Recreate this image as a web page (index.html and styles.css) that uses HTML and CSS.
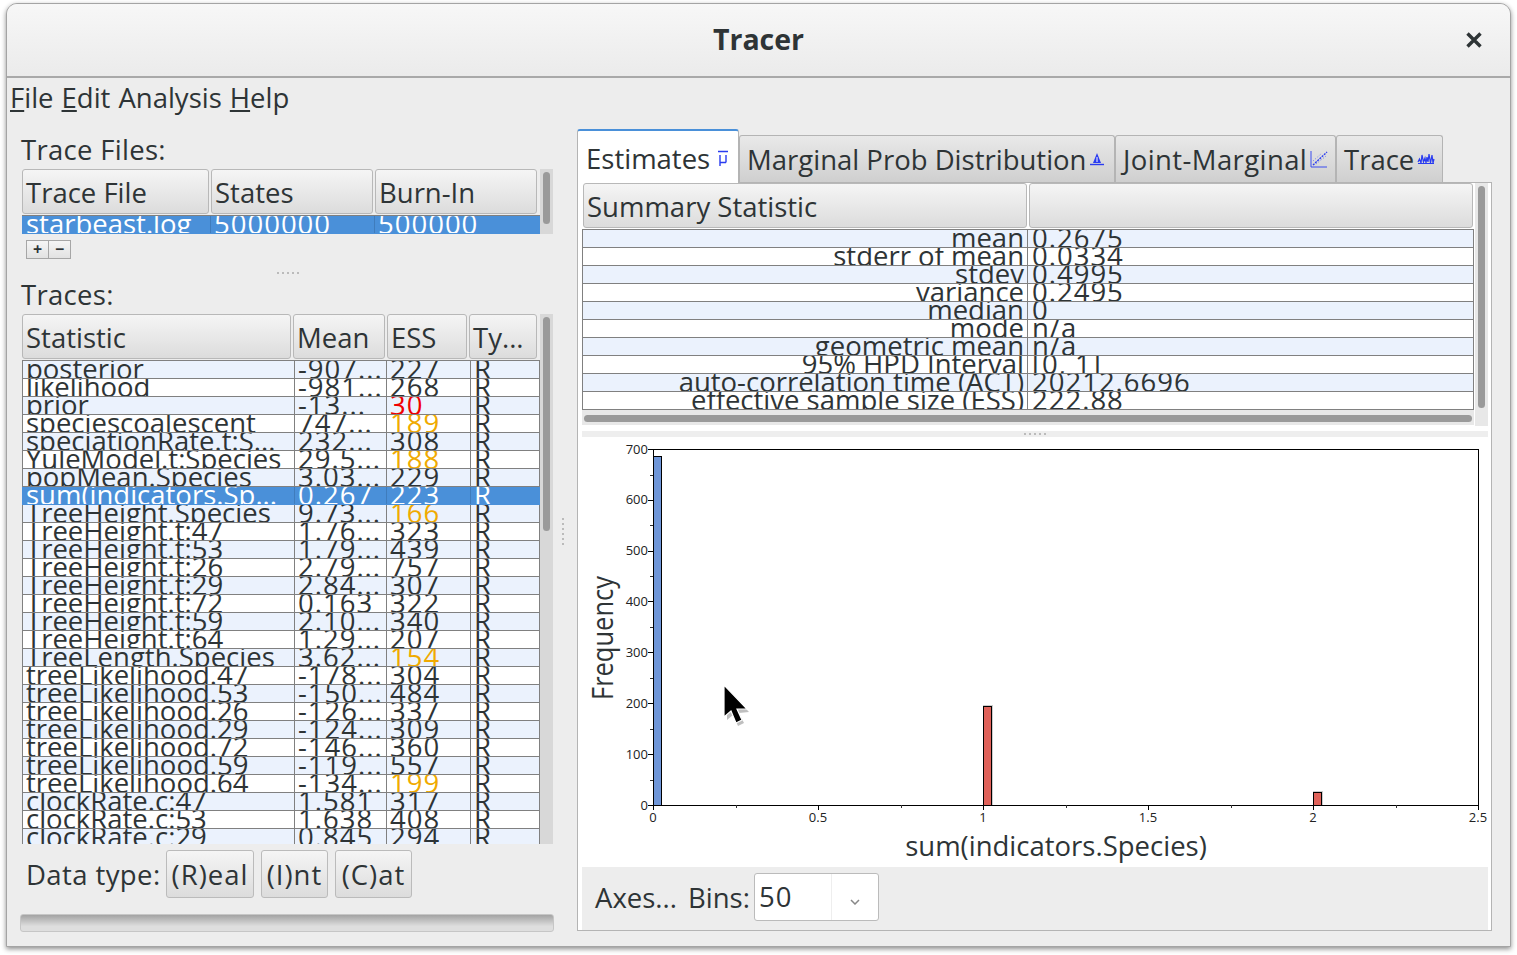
FILE: index.html
```html
<!DOCTYPE html>
<html lang="en">
<head>
  <meta charset="UTF-8" />
  <title>Tracer</title>
  <link rel="stylesheet" href="styles.css">
</head>
<body>
  <div class="window">
    <header class="titlebar">
      <span class="title">Tracer</span>
      <svg class="close" width="18" height="18" viewBox="0 0 18 18"><path d="M2.5 2.5 L15.5 15.5 M15.5 2.5 L2.5 15.5" stroke="#2e3436" stroke-width="3.4"/></svg>
    </header>
    <nav class="menubar">
      <span><u>F</u>ile</span>
      <span><u>E</u>dit</span>
      <span>Analysis</span>
      <span><u>H</u>elp</span>
    </nav>

    <div class="main">
      <section class="left">
        <div class="label files-label">Trace Files:</div>
        <div class="scrolled">
          <div class="table files">
            <div class="head">
              <div class="hcell">Trace File</div>
              <div class="hcell">States</div>
              <div class="hcell">Burn-In</div>
            </div>
            <div class="rows">
              <div class="row sel"><span>starbeast.log</span><span>5000000</span><span>500000</span></div>
            </div>
          </div>
          <div class="vtrack"><div class="vthumb files-thumb"></div></div>
        </div>
        <div class="addremove"><span>+</span><span>−</span></div>
        <div class="grip-h"><div class="dots-h"></div></div>
        <div class="label traces-label">Traces:</div>
        <div class="scrolled traces-wrap">
          <div class="table traces">
            <div class="head">
              <div class="hcell">Statistic</div>
              <div class="hcell">Mean</div>
              <div class="hcell">ESS</div>
              <div class="hcell">Ty...</div>
            </div>
            <div class="rows">
              <div class="row"><span>posterior</span><span>-907...</span><span>227</span><span>R</span></div>
              <div class="row"><span>likelihood</span><span>-981...</span><span>268</span><span>R</span></div>
              <div class="row"><span>prior</span><span>-13...</span><span class="bad">30</span><span>R</span></div>
              <div class="row"><span>speciescoalescent</span><span>747...</span><span class="low">189</span><span>R</span></div>
              <div class="row"><span>speciationRate.t:S...</span><span>232...</span><span>308</span><span>R</span></div>
              <div class="row"><span>YuleModel.t:Species</span><span>29.5...</span><span class="low">188</span><span>R</span></div>
              <div class="row"><span>popMean.Species</span><span>3.03...</span><span>229</span><span>R</span></div>
              <div class="row sel"><span>sum(indicators.Sp...</span><span>0.267</span><span>223</span><span>R</span></div>
              <div class="row"><span>TreeHeight.Species</span><span>9.73...</span><span class="low">166</span><span>R</span></div>
              <div class="row"><span>TreeHeight.t:47</span><span>1.76...</span><span>323</span><span>R</span></div>
              <div class="row"><span>TreeHeight.t:53</span><span>1.79...</span><span>439</span><span>R</span></div>
              <div class="row"><span>TreeHeight.t:26</span><span>2.79...</span><span>757</span><span>R</span></div>
              <div class="row"><span>TreeHeight.t:29</span><span>2.84...</span><span>307</span><span>R</span></div>
              <div class="row"><span>TreeHeight.t:72</span><span>0.163</span><span>322</span><span>R</span></div>
              <div class="row"><span>TreeHeight.t:59</span><span>2.10...</span><span>340</span><span>R</span></div>
              <div class="row"><span>TreeHeight.t:64</span><span>1.29...</span><span>207</span><span>R</span></div>
              <div class="row"><span>TreeLength.Species</span><span>3.62...</span><span class="low">154</span><span>R</span></div>
              <div class="row"><span>treeLikelihood.47</span><span>-178...</span><span>304</span><span>R</span></div>
              <div class="row"><span>treeLikelihood.53</span><span>-150...</span><span>484</span><span>R</span></div>
              <div class="row"><span>treeLikelihood.26</span><span>-126...</span><span>337</span><span>R</span></div>
              <div class="row"><span>treeLikelihood.29</span><span>-124...</span><span>309</span><span>R</span></div>
              <div class="row"><span>treeLikelihood.72</span><span>-146...</span><span>360</span><span>R</span></div>
              <div class="row"><span>treeLikelihood.59</span><span>-119...</span><span>557</span><span>R</span></div>
              <div class="row"><span>treeLikelihood.64</span><span>-134...</span><span class="low">199</span><span>R</span></div>
              <div class="row"><span>clockRate.c:47</span><span>1.581</span><span>317</span><span>R</span></div>
              <div class="row"><span>clockRate.c:53</span><span>1.638</span><span>408</span><span>R</span></div>
              <div class="row"><span>clockRate.c:29</span><span>0.845</span><span>294</span><span>R</span></div>
            </div>
          </div>
          <div class="vtrack"><div class="vthumb traces-thumb"></div></div>
        </div>
        <div class="datatype">
          <span class="dt-label">Data type:</span>
          <button class="btn btn-real">(R)eal</button>
          <button class="btn btn-int">(I)nt</button>
          <button class="btn btn-cat">(C)at</button>
        </div>
        <div class="progress"></div>
      </section>

      <div class="grip-v"><div class="dots-v"></div></div>

      <section class="right">
        <div class="tabs">
          <div class="tab active tab-est">Estimates
            <svg class="mu" width="12" height="18" viewBox="0 0 12 18"><path d="M1 1.5 H11 M3 5 V16 M3 12.5 H9 M9 5 V12.5" stroke="#2a3cf0" stroke-width="1.4" fill="none"/></svg>
          </div>
          <div class="tab tab-marg">Marginal Prob Distribution
            <svg width="16" height="14" viewBox="0 0 16 14"><path d="M8 1 L12 11 H4 Z" fill="#2a3cf0"/><path d="M8 5 V10" stroke="#fff"/><path d="M1 12.5 H15" stroke="#2a3cf0" stroke-width="1.4"/></svg>
          </div>
          <div class="tab tab-joint">Joint-Marginal
            <svg width="18" height="18" viewBox="0 0 18 18"><path d="M1 1 V17 H17" stroke="#3a4cf0" fill="none"/><path d="M3 15 L17 2" stroke="#2a3cf0" stroke-width="1.4" stroke-dasharray="2 1"/><path d="M6 14 L16 6 M3 11 L12 3" stroke="#6a78f0" stroke-dasharray="1 2"/></svg>
          </div>
          <div class="tab tab-trace">Trace
            <svg width="18" height="14" viewBox="0 0 18 14"><path d="M1 10 L2.5 7 L4 11 L5 3 L6.5 10 L8 6 L9 11 L10 5 L11 10 L12 2 L13.5 11 L15 3 L16 11 L17 7 M1 11.5 H17" stroke="#2a3cf0" stroke-width="1.2" fill="none"/></svg>
          </div>
        </div>
        <div class="panel">
          <div class="summary">
            <div class="summary-main">
              <div class="table stats">
                <div class="head">
                  <div class="hcell">Summary Statistic</div>
                  <div class="hcell"></div>
                </div>
                <div class="rows">
                  <div class="row"><span>mean</span><span>0.2675</span></div>
                  <div class="row"><span>stderr of mean</span><span>0.0334</span></div>
                  <div class="row"><span>stdev</span><span>0.4995</span></div>
                  <div class="row"><span>variance</span><span>0.2495</span></div>
                  <div class="row"><span>median</span><span>0</span></div>
                  <div class="row"><span>mode</span><span>n/a</span></div>
                  <div class="row"><span>geometric mean</span><span>n/a</span></div>
                  <div class="row"><span>95% HPD Interval</span><span>[0, 1]</span></div>
                  <div class="row"><span>auto-correlation time (ACT)</span><span>20212.6696</span></div>
                  <div class="row"><span>effective sample size (ESS)</span><span>222.88</span></div>
                </div>
              </div>
              <div class="htrack"><div class="hthumb"></div></div>
            </div>
            <div class="vtrack stats-track"><div class="vthumb stats-thumb"></div></div>
          </div>
          <div class="grip-band"><div class="dots-h"></div></div>
          <svg class="chart" width="906" height="430" viewBox="582 437 906 430">
            <rect x="653.5" y="449.5" width="825" height="356" fill="#fff" stroke="#000"/>
            <!-- y ticks -->
            <path d="M648 805.5H653 M648 754.5H653 M648 703.5H653 M648 652.5H653 M648 601.5H653 M648 551.5H653 M648 500.5H653 M648 449.5H653" stroke="#000"/>
            <path d="M650 780.5H653 M650 729.5H653 M650 678.5H653 M650 627.5H653 M650 576.5H653 M650 525.5H653 M650 475.5H653" stroke="#333"/>
            <!-- x ticks -->
            <path d="M653.5 805V810 M818.5 805V810 M983.5 805V810 M1148.5 805V810 M1313.5 805V810 M1478.5 805V810" stroke="#000"/>
            <path d="M736.5 805V808 M901.5 805V808 M1066.5 805V808 M1231.5 805V808 M1396.5 805V808" stroke="#333"/>
            <g class="tick-y">
              <text x="648" y="810">0</text>
              <text x="648" y="759">100</text>
              <text x="648" y="708">200</text>
              <text x="648" y="657">300</text>
              <text x="648" y="606">400</text>
              <text x="648" y="555">500</text>
              <text x="648" y="504">600</text>
              <text x="648" y="454">700</text>
            </g>
            <g class="tick-x">
              <text x="653" y="822">0</text>
              <text x="818" y="822">0.5</text>
              <text x="983" y="822">1</text>
              <text x="1148" y="822">1.5</text>
              <text x="1313" y="822">2</text>
              <text x="1478" y="822">2.5</text>
            </g>
            <path d="M983 705h10v100h-10z M1313 791h10v14h-10z" fill="#ccc"/>
            <rect x="653.5" y="456.5" width="8" height="349" fill="#6f96d8" stroke="#000"/>
            <rect x="983.5" y="706.5" width="8" height="99" fill="#e0625a" stroke="#000"/>
            <rect x="1313.5" y="792.5" width="8" height="13" fill="#e0625a" stroke="#000"/>
            <text class="axis-title" x="1056" y="856" text-anchor="middle">sum(indicators.Species)</text>
            <text class="axis-title freq" transform="translate(613 638) rotate(-90) scale(1 1.15)" text-anchor="middle">Frequency</text>
          </svg>
          <div class="chart-bar">
            <span class="axes">Axes...</span>
            <span class="bins">Bins:</span>
            <div class="combo"><span class="combo-val">50</span><span class="combo-arrow"><svg width="10" height="6" viewBox="0 0 10 6"><path d="M1 1 L5 5 L9 1" stroke="#888" stroke-width="1.5" fill="none"/></svg></span></div>
          </div>
        </div>
      </section>
    </div>

    <svg class="cursor" width="30" height="44" viewBox="0 0 30 44"><path d="M5 5 V36 L11 31 L16 42 L22 39 L17 29 L27 28 Z" fill="#000" opacity="0.25"/><path d="M2 1 V33 L9 27 L14 39 L20 36 L15 25 L25 25 Z" fill="#000" stroke="#fff" stroke-width="1.2"/></svg>
  </div>
</body>
</html>
```

FILE: styles.css
```css
* {
  box-sizing: border-box;
}

body {
  margin: 0;
  padding: 3px 0 0 6px;
  width: 1517px;
  height: 955px;
  overflow: hidden;
  background-color: #fff;
  font-family: "Open Sans", sans-serif;
  font-size: 27.5px;
  color: #2e3436;
}

.window {
  position: relative;
  width: 1505px;
  height: 944px;
  background-color: #ededed;
  border: 1px solid #a4a4a4;
  border-radius: 11px 11px 0 0;
  box-shadow: 0 2px 5px rgba(0,0,0,0.45);
  display: flex;
  flex-direction: column;
}

/* Title bar */
.titlebar {
  height: 74px;
  flex: none;
  padding-bottom: 2px;
  display: flex;
  align-items: center;
  justify-content: center;
  position: relative;
  background: linear-gradient(#f7f7f7, #ebebeb);
  border-bottom: 2px solid #a9a9a9;
  border-radius: 10px 10px 0 0;
}

.title {
  font-weight: 700;
  font-size: 28.5px;
}

.close {
  position: absolute;
  right: 27px;
  top: 27px;
}

.menubar {
  height: 40px;
  flex: none;
  display: flex;
  gap: 8px;
  align-items: center;
  padding: 0 0 2px 3px;
}

.main {
  flex: 1;
  display: flex;
}

/* Left pane */
.left {
  width: 547px;
  flex: none;
  padding-left: 15px;
  display: flex;
  flex-direction: column;
}

.label {
  margin-left: -1px;
  letter-spacing: 0.3px;
}

.files-label {
  height: 51px;
  padding-top: 15px;
  line-height: 34px;
}

.traces-label {
  height: 34px;
  line-height: 30px;
}

.scrolled {
  display: flex;
  width: 531px;
}

.traces-wrap {
  height: 530px;
}

.table {
  width: 518px;
  overflow: hidden;
}

.head {
  display: flex;
  gap: 2px;
  height: 46px;
  padding-bottom: 1px;
}

.hcell {
  background: linear-gradient(#f5f5f5, #dcdcdc);
  border: 1px solid #b8b8b8;
  border-radius: 3px;
  line-height: 45px;
  padding-left: 3px;
  white-space: nowrap;
  overflow: hidden;
}

.rows {
  border-top: 1px solid #808080;
}

.row {
  display: grid;
  height: 18px;
  border-bottom: 1px solid #808080;
  border-left: 1px solid #808080;
  border-right: 1px solid #808080;
  background: #fff;
}

.row span {
  display: block;
  height: 17px;
  line-height: 16px;
  white-space: nowrap;
  overflow: hidden;
  padding-left: 3px;
  border-right: 1px solid #808080;
}

.row span:last-child {
  border-right: 0;
}

.rows .row:nth-child(odd) {
  background: #ebf2fd;
}

.rows .row.sel {
  background: #4a90d9;
  color: #fff;
  border-color: #4a90d9;
}

.row.sel span {
  border-color: #3f7cbc;
}

.bad {
  color: #f00000;
}

.low {
  color: #f0aa00;
}

/* numbers are set wider than the labels */
.files .row span:nth-child(n+2),
.traces .row span:nth-child(2),
.traces .row span:nth-child(3),
.stats .row span:nth-child(2),
.combo-val {
  letter-spacing: 1px;
}

/* column sizes */
.files .hcell:nth-child(1) {
  width: 187px;
}

.files .hcell:nth-child(2),
.files .hcell:nth-child(3) {
  width: 162px;
}

.files .row {
  grid-template-columns: 188px 164px 1fr;
}

.traces .hcell:nth-child(1) {
  width: 269px;
}

.traces .hcell:nth-child(2) {
  width: 92px;
}

.traces .hcell:nth-child(3) {
  width: 80px;
}

.traces .hcell:nth-child(4) {
  width: 68px;
}

.traces .row {
  grid-template-columns: 272px 92px 84px 1fr;
}

/* scroll bars */
.vtrack {
  width: 13px;
  flex: none;
  background: #d8d8d8;
  padding: 3px 3px;
}

.vthumb {
  background: #9a9a9a;
  border-radius: 4px;
  width: 7px;
}

.files-thumb {
  height: 52px;
}

.traces-thumb {
  height: 214px;
}

.addremove {
  display: flex;
  margin: 6px 0 0 4px;
  height: 19px;
  width: 45px;
  border: 1px solid #a6a6a6;
  background: linear-gradient(#f5f5f5, #e2e2e2);
  font-size: 16px;
  font-weight: 700;
  line-height: 16px;
}

.addremove span {
  flex: 1;
  text-align: center;
}

.addremove span:first-child {
  border-right: 1px solid #a6a6a6;
}

.grip-h {
  height: 21px;
  padding-top: 6px;
  display: flex;
  justify-content: center;
  align-items: center;
}

.dots-h {
  width: 23px;
  height: 2px;
  background: repeating-linear-gradient(90deg, #bbb 0 2px, transparent 2px 5px);
}

.dots-v {
  width: 2px;
  height: 28px;
  background: repeating-linear-gradient(180deg, #bbb 0 2px, transparent 2px 5px);
}

.datatype {
  display: flex;
  align-items: center;
  height: 48px;
  margin-top: 6px;
  padding-left: 4px;
}

.dt-label {
  width: 140px;
  letter-spacing: 0.4px;
}

.btn {
  height: 48px;
  font: inherit;
  color: inherit;
  letter-spacing: 1px;
  padding: 0;
  background: linear-gradient(#f5f5f5, #dcdcdc);
  border: 1px solid #bbb;
  border-radius: 3px;
}

.btn-real {
  width: 88px;
  margin-right: 7px;
}

.btn-int {
  width: 67px;
  margin-right: 7px;
}

.btn-cat {
  width: 77px;
}

.progress {
  margin: 16px 0 0 -2px;
  width: 534px;
  height: 18px;
  background: linear-gradient(#a3a3a3, #dedede 70%);
  border: 1px solid #c6c6c6;
  border-radius: 3px;
}

.grip-v {
  width: 23px;
  flex: none;
  padding-right: 5px;
  display: flex;
  justify-content: center;
  align-items: center;
}

/* Right pane */
.right {
  width: 915px;
  flex: none;
  padding-top: 11px;
}

.tabs {
  display: flex;
  align-items: flex-end;
  height: 53px;
}

.tab {
  height: 47px;
  display: flex;
  align-items: center;
  gap: 3px;
  white-space: nowrap;
  padding-left: 7px;
  background: linear-gradient(#e9e9e9, #cfcfcf);
  border: 1px solid #b4b4b4;
  border-bottom: 0;
  border-radius: 3px 3px 0 0;
}

.tab.active {
  height: 54px;
  padding: 3px 0 0 8px;
  background: #fff;
  border-top: 2px solid #4a90d9;
  border-bottom: 0;
  margin-bottom: -1px;
  position: relative;
}

.mu {
  margin-left: 4px;
}

.tab-est {
  width: 162px;
}

.tab-marg {
  width: 376px;
}

.tab-joint {
  width: 221px;
  letter-spacing: 0.4px;
}

.tab-trace {
  width: 107px;
}

.panel {
  height: 749px;
  background: #fff;
  border: 1px solid #b4b4b4;
  padding-left: 4px;
  display: flex;
  flex-direction: column;
}

.summary {
  display: flex;
  width: 906px;
  height: 243px;
}

.summary-main {
  width: 892px;
  margin-right: 1px;
}

.stats {
  width: 892px;
}

.stats .head {
  padding-left: 1px;
}

.stats .hcell {
  width: 444px;
}

.stats .row {
  grid-template-columns: 445px 1fr;
}

.stats .row span:first-child {
  text-align: right;
  padding-right: 3px;
}

.stats .row span:last-child {
  padding-left: 4px;
}

.stats-track {
  background: #e8e8e8;
  width: 13px;
}

.stats-thumb {
  height: 222px;
}

.htrack {
  height: 15px;
  background: #e8e8e8;
  padding: 5px 2px 3px;
}

.hthumb {
  height: 7px;
  background: #9a9a9a;
  border-radius: 4px;
}

.grip-band {
  height: 6px;
  width: 906px;
  margin-top: 5px;
  background: #eee;
  display: flex;
  justify-content: center;
  align-items: center;
}

.chart {
  display: block;
  flex: none;
}

.tick-y text {
  font-size: 13px;
  text-anchor: end;
  fill: #222;
}

.tick-x text {
  font-size: 13px;
  text-anchor: middle;
  fill: #222;
}

.axis-title {
  font-size: 27.5px;
  fill: #2e3436;
}

.axis-title.freq {
  font-size: 25.5px;
}

.chart-bar {
  width: 906px;
  height: 63px;
  background: #ededed;
  display: flex;
  align-items: center;
  padding: 0 0 3px 13px;
}

.axes {
  margin-right: 11px;
}

.bins {
  margin-right: 4px;
}

.combo {
  width: 125px;
  height: 48px;
  background: #fff;
  border: 1px solid #bbb;
  border-radius: 3px;
  display: flex;
  align-items: center;
}

.combo-val {
  width: 77px;
  padding-left: 4px;
  height: 100%;
  line-height: 46px;
  border-right: 1px solid #eee;
}

.combo-arrow {
  flex: 1;
  text-align: center;
  line-height: 10px;
}

.cursor {
  position: absolute;
  left: 715px;
  top: 680px;
}
```
